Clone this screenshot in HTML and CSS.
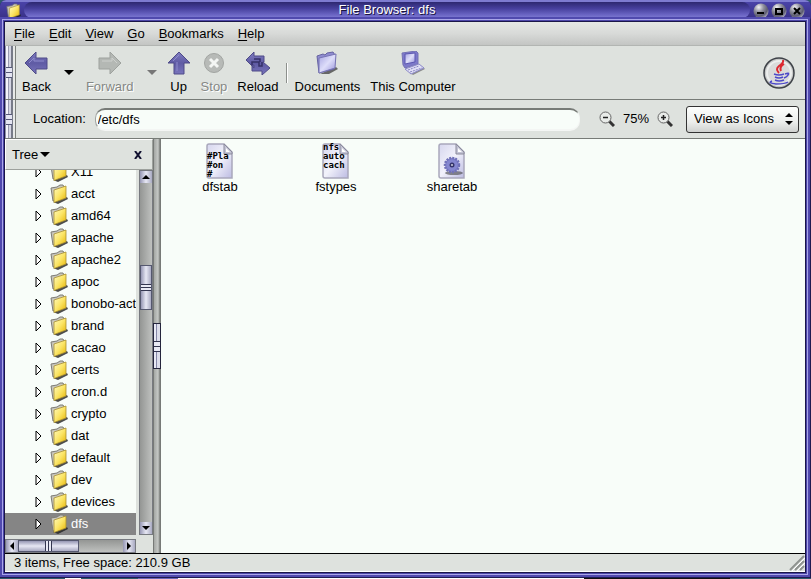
FILE: index.html
```html
<!DOCTYPE html>
<html lang="en">
<head>
  <meta charset="UTF-8">
  <title>File Browser: dfs</title>
  <link rel="stylesheet" href="styles.css">
</head>
<body>
  <svg class="defs" width="0" height="0" aria-hidden="true">
    <defs>
      <linearGradient id="gold" x1="0" y1="0" x2="1" y2="1">
        <stop offset="0" stop-color="#fffbc0"/><stop offset="0.5" stop-color="#fbe566"/><stop offset="1" stop-color="#e6b400"/>
      </linearGradient>
      <linearGradient id="lilac" x1="0" y1="0" x2="1" y2="1">
        <stop offset="0" stop-color="#a5a3e0"/><stop offset="0.5" stop-color="#dedefa"/><stop offset="1" stop-color="#9590d8"/>
      </linearGradient>
      <linearGradient id="paper" x1="0" y1="0" x2="1" y2="1">
        <stop offset="0" stop-color="#d6d6ee"/><stop offset="0.5" stop-color="#f2f2fb"/><stop offset="1" stop-color="#bcbbe2"/>
      </linearGradient>
      <linearGradient id="violet" x1="0" y1="0" x2="0" y2="1">
        <stop offset="0" stop-color="#7f7cc0"/><stop offset="0.5" stop-color="#5f5ba4"/><stop offset="1" stop-color="#7975bc"/>
      </linearGradient>
      <radialGradient id="ball" cx="0.35" cy="0.25" r="0.85">
        <stop offset="0" stop-color="#f2f2f4"/><stop offset="0.4" stop-color="#8c8c9a"/><stop offset="0.7" stop-color="#5c5b70"/><stop offset="1" stop-color="#c8c8d4"/>
      </radialGradient>
      <symbol id="folder" viewBox="0 0 18 20">
        <path d="M3 18 17 13 18 15 8 20Z" fill="#222" opacity="0.8"/>
        <path d="M1 4 7 3 10 1 13 1 14 3 14 14 3 17Z" fill="#c8c6bc" stroke="#7d7c76"/>
        <path d="M4 6 16 2 16 14 4 18.500Z" fill="url(#gold)" stroke="#a98f30" stroke-width="0.8"/>
      </symbol>
      <symbol id="sheet" viewBox="0 0 28 36">
        <path d="M3 1H18L26 9V35H3Q1 35 1 33V3Q1 1 3 1Z" fill="url(#paper)" stroke="#a9a8bc" stroke-width="1.500"/>
        <path d="M18 1V11H26V9Z" fill="#c3c3d4" stroke="#8b8b9c"/>
        <path d="M20 5V9H24Z" fill="#fff"/>
      </symbol>
    </defs>
  </svg>

  <div class="window">
    <header class="titlebar">
      <svg class="title-icon" viewBox="0 0 18 20"><use href="#folder"/></svg>
      <h1 class="title">File Browser: dfs</h1>
      <div class="window-buttons">
        <button aria-label="Minimize"><svg viewBox="0 0 16 16"><circle cx="8" cy="8" r="7.500" fill="url(#ball)"/><path d="M4 10H11" stroke="#000" stroke-width="2"/></svg></button>
        <button aria-label="Maximize"><svg viewBox="0 0 16 16"><circle cx="8" cy="8" r="7.500" fill="url(#ball)"/><path d="M5 6H11V11H5Z" fill="none" stroke="#000" stroke-width="2"/></svg></button>
        <button aria-label="Close"><svg viewBox="0 0 16 16"><circle cx="8" cy="8" r="7.500" fill="url(#ball)"/><path d="M5 5 11 11M11 5 5 11" stroke="#000" stroke-width="2"/></svg></button>
      </div>
    </header>

    <div class="frame">
      <nav class="menubar">
        <button><u>F</u>ile</button>
        <button><u>E</u>dit</button>
        <button><u>V</u>iew</button>
        <button><u>G</u>o</button>
        <button><u>B</u>ookmarks</button>
        <button><u>H</u>elp</button>
      </nav>

      <div class="bar toolbar">
        <span class="handle"></span>
        <button class="tool back"><svg viewBox="0 0 24 24"><path d="M1 12 12 1V7H23V18H12V23Z" fill="url(#violet)" stroke="#4e4b88"/><path d="M5 12 10 7V10H20" fill="none" stroke="#8e8bcc"/></svg>Back</button>
        <button class="drop" aria-label="Back history"><svg viewBox="0 0 10 5"><path d="M0 0H10L5 5Z"/></svg></button>
        <button class="tool forward" disabled><svg viewBox="0 0 24 24"><path d="M23 12 12 1V7H1V18H12V23Z" fill="#b4b8b4" stroke="#9ea29e"/><path d="M19 12 14 7V10H4" fill="none" stroke="#cdd0cd"/></svg>Forward</button>
        <button class="drop" disabled aria-label="Forward history"><svg viewBox="0 0 10 5"><path d="M0 0H10L5 5Z" fill="#777"/></svg></button>
        <button class="tool up"><svg viewBox="0 0 24 24"><path d="M12 1 23 12H17V23H7V12H1Z" fill="url(#violet)" stroke="#4e4b88"/><path d="M6 10 12 4M10 11V20" fill="none" stroke="#8e8bcc"/></svg>Up</button>
        <button class="tool stop" disabled><svg viewBox="0 0 24 24"><circle cx="12" cy="12" r="9.500" fill="#b7bab7" stroke="#a2a5a2"/><path d="M8 8 16 16M16 8 8 16" stroke="#f4f6f4" stroke-width="3"/></svg>Stop</button>
        <button class="tool reload"><svg viewBox="0 0 24 24"><path d="M0 9 8 1V5H18V11H17L24 17 16 24V20H6V14H8V17Z" fill="url(#violet)" stroke="#4e4b88"/><path d="M6 14V11H13V15H16V11M8 8H14V11" fill="none" stroke="#343068" stroke-width="1.500"/></svg>Reload</button>
        <span class="separator"></span>
        <button class="tool documents"><svg viewBox="0 0 24 24"><path d="M5 23 21 16 23 18 14 23Z" fill="#333" opacity="0.7"/><path d="M2 5 8 3 10 4 12 2 18 1 20 4 19 18 4 22Z" fill="#8f8cd0" stroke="#6663a0"/><path d="M4 7 21 3 20 17 4 22Z" fill="url(#lilac)" stroke="#7774b4"/></svg>Documents</button>
        <button class="tool computer"><svg viewBox="0 0 24 24"><path d="M8 21 22 16 24 18 12 24Z" fill="#555" opacity="0.6"/><path d="M1 2 15 0 17 2 17 13 4 17 2 14Z" fill="#7d79ca" stroke="#7472b4"/><path d="M4 3 14 2V11L4 13Z" fill="url(#lilac)" stroke="#5b57b0"/><path d="M4 18 18 13 23 17 10 23Z" fill="#e0e0f5" stroke="#8c89c8"/><path d="M7 19 18 15M9 21 21 17" stroke="#8884c4" stroke-dasharray="2 1"/></svg>This Computer</button>
        <svg class="java" viewBox="0 0 32 32" role="img" aria-label="Java">
          <circle cx="16" cy="16" r="15" fill="#c7c9c8" stroke="#3e4248" stroke-width="1.500"/>
          <circle cx="16" cy="16" r="12" fill="#d9dbda" stroke="#eceeed" stroke-width="2"/>
          <path d="M20 3Q21 6 16 9Q12 12 16 16M21 7Q16 10 18 14" fill="none" stroke="#dc2830" stroke-width="2"/>
          <path d="M11 17Q16 19 21 17M22 17Q27 15 25 18Q24 20 21 21M12 20Q16 22 20 20M12 23Q16 25 21 23M9 24Q4 26 13 27Q22 27 25 25" fill="none" stroke="#4c48c8" stroke-width="1.500"/>
        </svg>
      </div>

      <div class="bar locationbar">
        <span class="handle"></span>
        <label for="location">Location:</label>
        <input id="location" type="text" value="/etc/dfs">
        <div class="zoom">
          <button aria-label="Zoom out"><svg viewBox="0 0 16 16"><path d="M10 10 15 15" stroke="#333" stroke-width="3"/><circle cx="6.500" cy="6.500" r="5.500" fill="#e8ebe8" stroke="#666"/><path d="M4 6.500H9" stroke="#222" stroke-width="1.500"/></svg></button>
          <span>75%</span>
          <button aria-label="Zoom in"><svg viewBox="0 0 16 16"><path d="M10 10 15 15" stroke="#333" stroke-width="3"/><circle cx="6.500" cy="6.500" r="5.500" fill="#e8ebe8" stroke="#666"/><path d="M4 6.500H9M6.500 4V9" stroke="#222" stroke-width="1.500"/></svg></button>
        </div>
        <div class="view">
          <select aria-label="View mode"><option>View as Icons</option><option>View as List</option></select>
          <svg viewBox="0 0 8 12"><path d="M0 4 4 0 8 4ZM0 8H8L4 12Z"/></svg>
        </div>
      </div>

      <div class="content">
        <aside class="side">
          <div class="side-head">
            <button class="side-mode">Tree <svg viewBox="0 0 10 5"><path d="M0 0H10L5 5Z"/></svg></button>
            <button class="side-close" aria-label="Close side pane"><svg viewBox="0 0 8 8"><path d="M1 0 7 8M7 0 1 8" stroke="#111130" stroke-width="2"/></svg></button>
          </div>
          <div class="side-body">
            <ul class="tree" id="tree"></ul>
            <div class="vscroll">
              <button aria-label="Scroll up"><svg viewBox="0 0 8 4"><path d="M0 4 4 0 8 4Z"/></svg></button>
              <span class="thumb"></span>
              <button aria-label="Scroll down"><svg viewBox="0 0 8 4"><path d="M0 0H8L4 4Z"/></svg></button>
            </div>
            <div class="hscroll">
              <button aria-label="Scroll left"><svg viewBox="0 0 4 8"><path d="M4 0V8L0 4Z"/></svg></button>
              <span class="thumb"></span>
              <button aria-label="Scroll right"><svg viewBox="0 0 4 8"><path d="M0 0V8L4 4Z"/></svg></button>
            </div>
          </div>
        </aside>
        <div class="splitter"><span></span></div>
        <main class="files">
          <a class="file" href="#dfstab"><span class="thumbnail"><svg viewBox="0 0 28 36"><use href="#sheet"/></svg><span class="preview low">#Pla<br>#on<br>#</span></span>dfstab</a>
          <a class="file" href="#fstypes"><span class="thumbnail"><svg viewBox="0 0 28 36"><use href="#sheet"/></svg><span class="preview">nfs<br>auto<br>cach</span></span>fstypes</a>
          <a class="file" href="#sharetab"><span class="thumbnail"><svg viewBox="0 0 28 36"><use href="#sheet"/><ellipse cx="16" cy="30" rx="9" ry="2" fill="#444" opacity="0.6"/><circle cx="14" cy="22" r="7" fill="#7f80cc" stroke="#7071b8" stroke-width="2.500" stroke-dasharray="2 1"/><circle cx="14" cy="22" r="5.500" fill="#8587d0"/><circle cx="14" cy="22" r="2.500" fill="#35356c"/><circle cx="14" cy="22" r="1" fill="#ccd"/></svg></span>sharetab</a>
        </main>
      </div>

      <footer class="statusbar">
        <span>3 items, Free space: 210.9 GB</span>
        <svg viewBox="0 0 16 16"><path d="M1 15 15 1M6 15 15 6M11 15 15 11" stroke="#8f9490" stroke-width="2"/><path d="M3 16 16 3M8 16 16 8" stroke="#fff"/></svg>
      </footer>
    </div>
  </div>

  <script>
    const folders = ["X11", "acct", "amd64", "apache", "apache2", "apoc", "bonobo-activation", "brand",
      "cacao", "certs", "cron.d", "crypto", "dat", "default", "dev", "devices", "dfs"];
    const tree = document.getElementById("tree");

    folders.forEach(name => {
      const item = document.createElement("li");
      if (name === "dfs") item.className = "selected";
      item.innerHTML = '<svg class="expander" viewBox="0 0 7 12"><path d="M1 1V11L6 6Z"/></svg>' +
        '<svg class="folder" viewBox="0 0 18 20"><use href="#folder"/></svg>' +
        '<a href="#' + name + '">' + name + '</a>';
      tree.appendChild(item);
    });
  </script>
</body>
</html>
```
FILE: styles.css
```css
* {
  box-sizing: border-box;
}
body {
  margin: 0;
  height: 100vh;
  padding-bottom: 1px;
  background: linear-gradient(90deg, #2d5a6c 0 8%, #fff 8% 10%, #2d5a6c 10% 17%, #6a65b8 17% 22%, #fff 22% 72%, #111 72% 90%, #2d5a6c 90%);
  color: #000;
  font: 13px/16px "Liberation Sans", Arial, sans-serif;
  overflow: hidden;
}
.defs {
  position: absolute;
}
button {
  padding: 0;
  border: 0;
  background: none;
  color: inherit;
  font: inherit;
}
svg {
  display: block;
  flex: none;
}
a {
  color: inherit;
  text-decoration: none;
}
.window {
  display: flex;
  flex-direction: column;
  height: 100%;
  border-radius: 6px 6px 0 0;
  background: #201b50;
}

/* title bar */
.titlebar {
  display: flex;
  align-items: center;
  gap: 3px;
  flex: none;
  height: 22px;
  padding: 0 6px;
  border-radius: 6px 6px 0 0;
  background: linear-gradient(#7d7bd0 0 2px, #4a43a8 2px, #393188 18px, #211b58 20px);
}
.title-icon {
  width: 15px;
  height: 17px;
}
.title {
  flex: 1;
  height: 16px;
  margin: 0 0 2px;
  border-radius: 8px;
  background: linear-gradient(#2d2870, #463f9c 40%, #6b65c4 80%, #7f7bd2);
  color: #fff;
  font-size: 13px;
  font-weight: normal;
  line-height: 16px;
  text-align: center;
  text-shadow: 1px 1px #18143c;
}
.window-buttons {
  display: flex;
  gap: 2px;
}
.window-buttons svg {
  width: 16px;
  height: 16px;
}

/* window frame */
.frame {
  display: flex;
  flex-direction: column;
  flex: 1;
  min-height: 0;
  margin: 0 6px 6px 5px;
  background: #dee2de;
  box-shadow: 0 0 0 1px #1a1648, 0 0 0 2px #4b45a8, 0 0 0 3px #aaa6e8, 0 0 0 5px #5049ae;
}
.menubar {
  display: flex;
  gap: 14px;
  flex: none;
  height: 24px;
  padding: 0 9px;
  border-bottom: 1px solid #b2b5b2;
  background: linear-gradient(#e4e7e4, #d8dad8 50%, #c3c5c3);
}
.menubar u {
  text-underline-offset: 2px;
}
.bar {
  display: flex;
  align-items: center;
  flex: none;
  border-bottom: 1px solid #777b77;
}
.toolbar {
  height: 54px;
}
.handle {
  align-self: stretch;
  width: 11px;
  border-right: 1px solid #7c807c;
  background:
    repeating-linear-gradient(#555878 0 1px, #e4e5f2 1px 5px) left 1px center / 6px 11px no-repeat,
    linear-gradient(90deg, #8c8fa8 0 1px, #f4f4fa 1px 3px, #9b9db2 3px 4px, #d5d6e4 4px 6px, #777b88 6px 8px, #e8eae8 8px);
}
.tool {
  display: flex;
  flex-direction: column;
  align-items: center;
  gap: 4px;
  padding-top: 1px;
}
.tool svg {
  width: 24px;
  height: 24px;
}
.tool:disabled {
  color: #858885;
  text-shadow: 1px 1px #fff;
}
.back {
  margin-left: 6px;
}
.drop {
  padding: 0 12px 0 13px;
}
.drop svg {
  width: 10px;
  height: 5px;
}
.forward + .drop {
  padding-right: 10px;
}
.stop {
  margin-left: 10px;
}
.reload {
  margin-left: 10px;
}
.separator {
  width: 2px;
  height: 20px;
  margin: 0 7px;
  border-left: 1px solid #8c908c;
  background: #fff;
}
.computer {
  margin-left: 10px;
}
.java {
  width: 32px;
  height: 32px;
  margin: 0 10px 0 auto;
}
.locationbar {
  height: 39px;
}
.locationbar label {
  margin: 0 9px 0 17px;
}
.locationbar input {
  flex: 1;
  min-width: 0;
  height: 23px;
  padding: 0 2px;
  border: solid #f4f6f4;
  border-width: 2px 1px;
  border-top-color: #777b77;
  border-left-color: #a0a3a0;
  border-radius: 10px;
  background: #f8fdf9;
  font: inherit;
}
.zoom {
  display: flex;
  align-items: center;
  gap: 8px;
  margin: 0 13px 0 19px;
}
.zoom svg {
  width: 16px;
  height: 16px;
}
.view {
  display: grid;
  align-items: center;
  margin-right: 6px;
}
.view select,
.view svg {
  grid-area: 1 / 1;
}
.view select {
  appearance: none;
  height: 27px;
  padding: 0 24px 0 7px;
  border: 1px solid #333;
  border-radius: 3px;
  background: linear-gradient(#fdfffd, #eceeec 60%, #cfd1cf);
  color: #000;
  font: inherit;
}
.view svg {
  justify-self: end;
  width: 8px;
  height: 12px;
  margin-right: 6px;
  pointer-events: none;
}

/* side pane */
.content {
  display: flex;
  flex: 1;
  min-height: 0;
}
.side {
  display: flex;
  flex-direction: column;
  flex: none;
  width: 148px;
}
.side-head {
  display: flex;
  align-items: center;
  justify-content: space-between;
  flex: none;
  height: 31px;
  padding: 0 10px 0 6px;
  border: 1px solid #9da19d;
  border-left-color: #fff;
  border-top-color: #fff;
}
.side-mode {
  display: flex;
  align-items: center;
  gap: 2px;
}
.side-mode svg {
  width: 10px;
  height: 5px;
}
.side-close svg {
  width: 8px;
  height: 8px;
}
.side-body {
  display: grid;
  grid-template: minmax(0, 1fr) 14px / minmax(0, 1fr) 14px;
  gap: 4px 3px;
  flex: 1;
  min-height: 0;
}
.tree {
  display: flex;
  flex-direction: column;
  justify-content: flex-end;
  margin: 0;
  padding: 0;
  background: #f8fdf9;
  list-style: none;
  overflow: hidden;
}
.tree li {
  display: flex;
  align-items: center;
  flex: none;
  height: 22px;
  padding-left: 30px;
  white-space: nowrap;
}
.tree .selected {
  background: #858585;
  color: #fff;
}
.expander {
  width: 7px;
  height: 12px;
  margin-right: 8px;
  fill: #fff;
  stroke: #000;
}
.folder {
  width: 18px;
  height: 20px;
  margin-right: 3px;
}
.vscroll,
.hscroll {
  display: grid;
  border: 1px solid #777a80;
}
.vscroll {
  grid-template-rows: 12px 5fr 45px 13fr 12px;
  background: linear-gradient(90deg, #949694, #bfc1bf);
}
.hscroll {
  grid-template-columns: 12px 61px 1fr 12px;
  background: linear-gradient(#949694, #bfc1bf);
}
.vscroll button,
.hscroll button {
  display: flex;
  align-items: center;
  justify-content: center;
  background: linear-gradient(90deg, #9697b4, #e7e8f4 50%, #a9aac2);
}
.vscroll button:last-child {
  grid-row: 5;
}
.hscroll button:last-child {
  grid-column: 4;
}
.vscroll svg {
  width: 8px;
  height: 4px;
}
.hscroll svg {
  width: 4px;
  height: 8px;
}
.thumb {
  border: 1px solid #55586f;
}
.vscroll .thumb {
  grid-row: 3;
  background:
    repeating-linear-gradient(#333650 0 1px, #e8e9f4 1px 3px) center / 12px 7px no-repeat,
    linear-gradient(90deg, #9697b4, #e7e8f4 50%, #a9aac2);
}
.hscroll .thumb {
  background:
    repeating-linear-gradient(90deg, #333650 0 1px, #e8e9f4 1px 3px) center / 7px 12px no-repeat,
    linear-gradient(#9697b4, #e7e8f4 50%, #a9aac2);
}
.splitter {
  display: flex;
  align-items: center;
  flex: none;
  width: 8px;
  background: linear-gradient(90deg, #777a77 0 1px, #a4a7a4 1px, #c5c8c5 5px, #777a77 7px);
}
.splitter span {
  width: 8px;
  height: 46px;
  border: 1px solid #25253c;
  background:
    repeating-linear-gradient(#333650 0 1px, #e8e9f4 1px 5px) center / 6px 11px no-repeat,
    linear-gradient(90deg, #e8e9f4 0 2px, #8688a8 2px 3px, #dcddea 3px);
}

/* icon view */
.files {
  display: flex;
  align-items: flex-start;
  flex: 1;
  min-width: 0;
  padding: 4px 1px;
  background: #f8fdf9;
}
.file {
  display: flex;
  flex-direction: column;
  align-items: center;
  width: 116px;
}
.thumbnail {
  display: grid;
}
.thumbnail svg,
.preview {
  grid-area: 1 / 1;
}
.thumbnail svg {
  width: 28px;
  height: 36px;
}
.preview {
  width: 28px;
  height: 36px;
  padding-left: 1px;
  font: bold 9px/9px "DejaVu Sans Mono", monospace;
  overflow: hidden;
}
.preview.low {
  padding-top: 9px;
}

.statusbar {
  display: flex;
  align-items: center;
  justify-content: space-between;
  flex: none;
  height: 19px;
  padding-left: 9px;
  border: solid #fff;
  border-width: 1px 0;
  border-top-color: #000;
}
.statusbar svg {
  width: 16px;
  height: 16px;
}
```
